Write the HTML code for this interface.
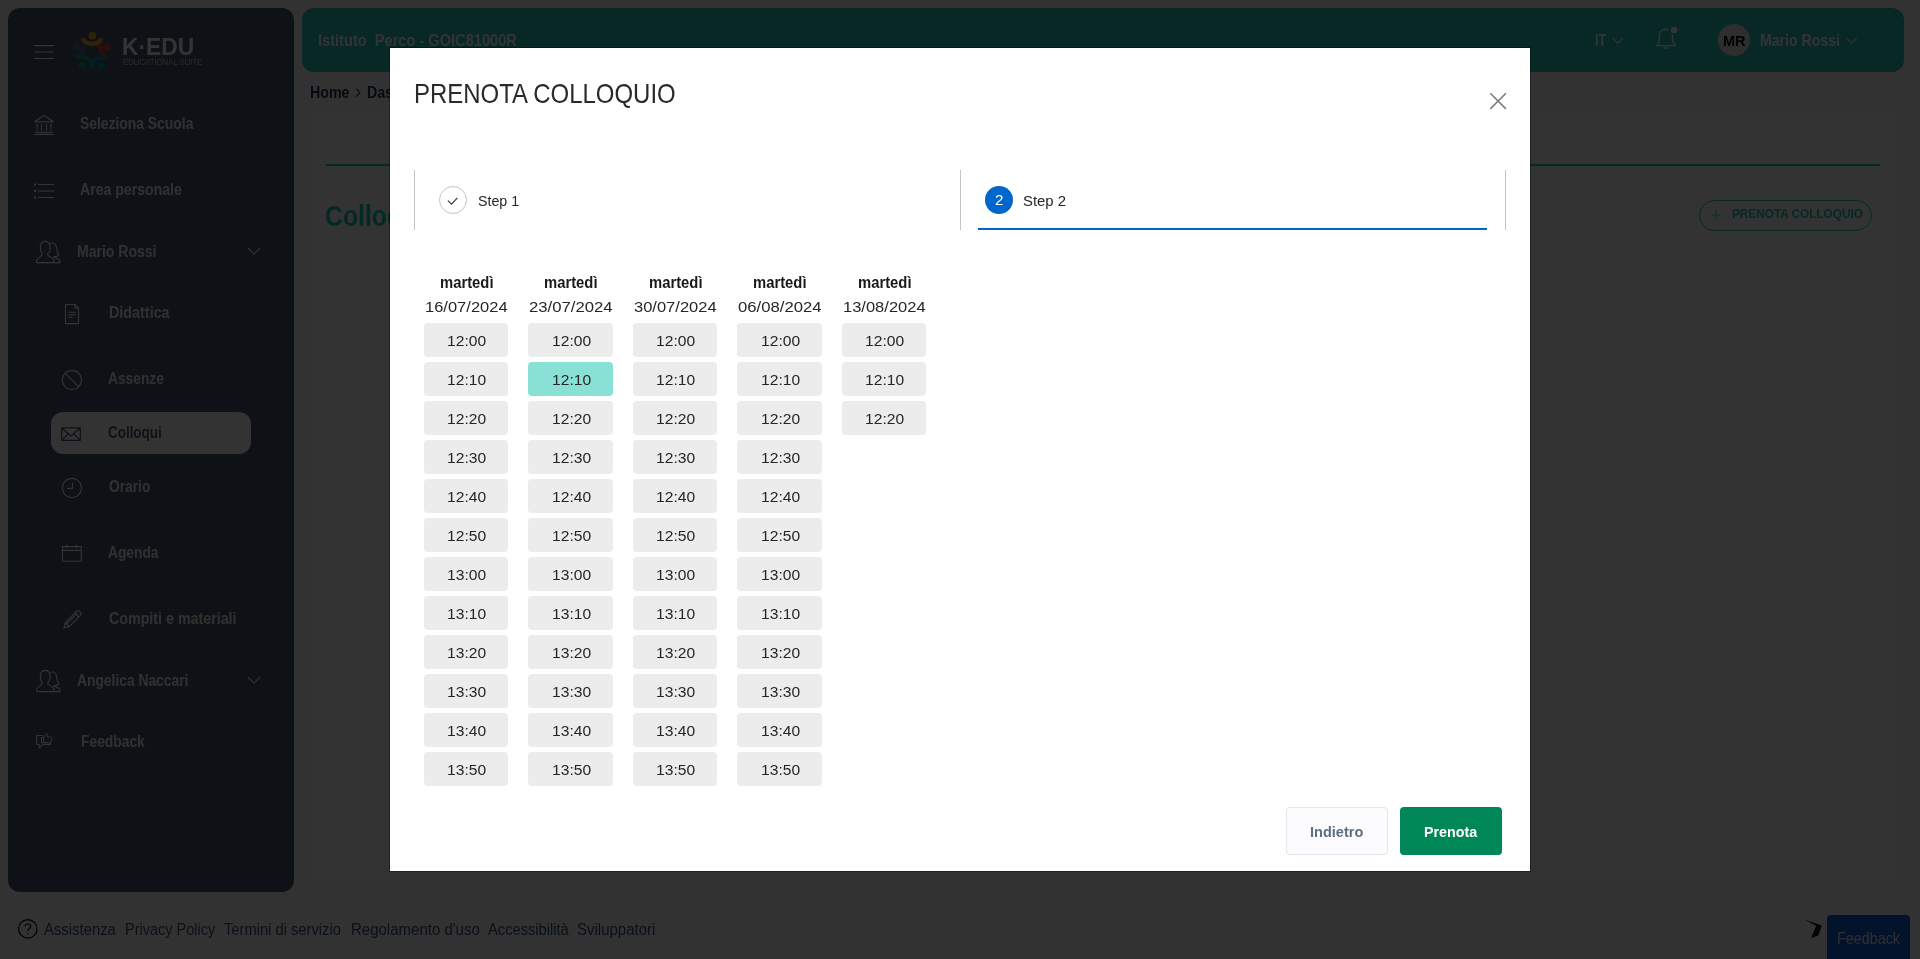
<!DOCTYPE html>
<html lang="it"><head><meta charset="utf-8"><title>K-EDU - Prenota colloquio</title>
<style>
html,body{margin:0;padding:0;overflow:hidden}
html{width:1920px;height:959px}
body{width:1920px;height:959px;overflow:hidden;position:relative;background:#fbfbfb;font-family:"Liberation Sans",sans-serif}
.t{position:absolute;line-height:1;white-space:pre;transform-origin:0 0;display:block}
.abs{position:absolute}
#page{position:absolute;left:0;top:0;width:1920px;height:959px}
#dim{position:absolute;left:0;top:0;width:1920px;height:959px;background:rgba(0,0,0,.8)}
#sidebar{position:absolute;left:8px;top:8px;width:286px;height:884px;border-radius:12px;background:#455b71}
#topbar{position:absolute;left:302px;top:8px;width:1602px;height:64px;border-radius:12px;background:#28c8b9}
#card{position:absolute;left:310px;top:112px;width:1586px;height:770px;border-radius:12px;background:#fff}
#pill{position:absolute;left:51px;top:412px;width:200px;height:42px;border-radius:12px;background:#fff}
#modal{position:absolute;left:390px;top:48px;width:1140px;height:823px;background:#fff;box-shadow:0 0 0 1px rgba(0,0,0,.35)}
.slot{position:absolute;height:34px;border-radius:4px;background:#ececec}
.slot.sel{background:#89e0d4}
svg{position:absolute;overflow:visible}
#all{position:absolute;left:0;top:0;width:1920px;height:959px;overflow:hidden;will-change:transform}
</style></head><body>
<div id="all">
<div id="page">
<div id="card"></div>
<div id="sidebar"></div>
<div id="topbar"></div>
<svg style="left:34px;top:40px" width="20" height="24"><g stroke="#fff" stroke-width="1.2"><path d="M0 5.6H20M0 12H20M0 18.5H20"/></g></svg>
<span class="t" style="left:122.30px;top:35px;font-size:24.5px;color:#ffffff;font-weight:700;transform:scaleX(0.9306);">K·EDU</span>
<span class="t" style="left:122.60px;top:58px;font-size:8.7px;color:rgba(255,255,255,.7);transform:scaleX(0.8949);">EDUCATIONAL SUITE</span>
<span class="t" style="left:80.40px;top:116px;font-size:16px;color:rgba(255,255,255,.9);font-weight:700;transform:scaleX(0.8672);">Seleziona Scuola</span>
<span class="t" style="left:80.40px;top:182px;font-size:16px;color:rgba(255,255,255,.9);font-weight:700;transform:scaleX(0.8810);">Area personale</span>
<span class="t" style="left:76.70px;top:244px;font-size:16px;color:rgba(255,255,255,.9);font-weight:700;transform:scaleX(0.8766);">Mario Rossi</span>
<span class="t" style="left:108.50px;top:305px;font-size:16px;color:rgba(255,255,255,.9);font-weight:700;transform:scaleX(0.8968);">Didattica</span>
<span class="t" style="left:108.30px;top:371px;font-size:16px;color:rgba(255,255,255,.9);font-weight:700;transform:scaleX(0.8610);">Assenze</span>
<span class="t" style="left:108.70px;top:479px;font-size:16px;color:rgba(255,255,255,.9);font-weight:700;transform:scaleX(0.8601);">Orario</span>
<span class="t" style="left:108.30px;top:545px;font-size:16px;color:rgba(255,255,255,.9);font-weight:700;transform:scaleX(0.8607);">Agenda</span>
<span class="t" style="left:108.70px;top:611px;font-size:16px;color:rgba(255,255,255,.9);font-weight:700;transform:scaleX(0.8907);">Compiti e materiali</span>
<span class="t" style="left:76.70px;top:673px;font-size:16px;color:rgba(255,255,255,.9);font-weight:700;transform:scaleX(0.8639);">Angelica Naccari</span>
<span class="t" style="left:80.60px;top:734px;font-size:16px;color:rgba(255,255,255,.9);font-weight:700;transform:scaleX(0.8643);">Feedback</span>
<div id="pill"></div>
<span class="t" style="left:107.50px;top:425px;font-size:16px;color:#455b71;font-weight:700;transform:scaleX(0.8393);">Colloqui</span>
<span class="t" style="left:318.40px;top:33px;font-size:16px;color:#ffffff;font-weight:700;transform:scaleX(0.9126);">Istituto  Perco - GOIC81000R</span>
<span class="t" style="left:1594.70px;top:33px;font-size:16px;color:#ffffff;font-weight:700;transform:scaleX(0.7807);">IT</span>
<div class="abs" style="left:1718px;top:24px;width:32px;height:32px;border-radius:50%;background:#e6e6e6"></div>
<span class="t" style="left:1723.30px;top:33px;font-size:15px;color:#000;font-weight:700;transform:scaleX(0.9645);">MR</span>
<span class="t" style="left:1759.50px;top:33px;font-size:16px;color:#ffffff;font-weight:700;transform:scaleX(0.8821);">Mario Rossi</span>
<span class="t" style="left:310.20px;top:85px;font-size:16px;color:#17324d;font-weight:700;transform:scaleX(0.8886);">Home</span>
<span class="t" style="left:366.90px;top:85px;font-size:16px;color:#17324d;font-weight:700;transform:scaleX(0.8867);">Dashboard</span>
<div class="abs" style="left:326px;top:164px;width:1554px;height:2px;background:#14cdb9"></div>
<span class="t" style="left:325.40px;top:201px;font-size:29.5px;color:#14cdb9;font-weight:700;transform:scaleX(0.8395);">Colloqui</span>
<div class="abs" style="left:1699px;top:200px;width:171px;height:29px;border:1px solid #14cdb9;border-radius:16px"></div>
<span class="t" style="left:1731.90px;top:207px;font-size:13.2px;color:#14cdb9;font-weight:700;transform:scaleX(0.8932);">PRENOTA COLLOQUIO</span>
<div class="abs" style="left:0;top:900px;width:1920px;height:1px;background:#fff"></div>
<span class="t" style="left:44.40px;top:922px;font-size:16px;color:#35527d;transform:scaleX(0.9287);">Assistenza</span>
<span class="t" style="left:125.00px;top:922px;font-size:16px;color:#35527d;transform:scaleX(0.9063);">Privacy Policy</span>
<span class="t" style="left:224.40px;top:922px;font-size:16px;color:#35527d;transform:scaleX(0.9190);">Termini di servizio</span>
<span class="t" style="left:350.60px;top:922px;font-size:16px;color:#35527d;transform:scaleX(0.9376);">Regolamento d'uso</span>
<span class="t" style="left:487.75px;top:922px;font-size:16px;color:#35527d;transform:scaleX(0.9173);">Accessibilità</span>
<span class="t" style="left:576.90px;top:922px;font-size:16px;color:#35527d;transform:scaleX(0.9371);">Sviluppatori</span>
<div class="abs" style="left:1827px;top:915px;width:83px;height:44px;border-radius:4px 4px 0 0;background:#0a5fd6"></div>
<span class="t" style="left:1837.00px;top:930px;font-size:17px;color:rgba(255,255,255,.85);transform:scaleX(0.8438);">Feedback</span>
<svg style="left:0;top:0" width="1920" height="959" fill="none" stroke="#fff" stroke-width="1.1" stroke-linejoin="round"><path d="M34.6 121.8L44 115.4L53.4 121.8ZM37.1 123.4V130.6M41.5 123.4V130.6M46.5 123.4V130.6M50.9 123.4V130.6M35 132.3H53M34.6 134.4H53.4"/><path d="M38 184.5H54M38 191H54M38 197.5H54"/><path d="M34 184.5H36M34 191H36M34 197.5H36" stroke-width="1.8"/><g transform="translate(36 241)"><path d="M0.5 21.6V19.3C0.7 17.3 5.9 15.8 6.3 13.1C4.9 11.6 4.3 9.3 4.3 6.3C4.3 2.5 6.2 0.4 9.2 0.4C11.6 0.4 13 1.7 13.5 3.5M13.5 3.5C14.2 5.6 14.4 8.4 13.6 10.4C13.2 11.5 12.3 12.4 11.6 13.1C11.5 14.6 13.6 15.6 17 17.5C17.9 18.1 18 19.4 18 21.6M13.5 3.5C14.3 2.5 15.3 2 16.6 2C19.3 2 20.3 4.4 20.7 7.6C21 10.6 22.5 12.6 22.8 13.9C22.2 15.2 19.8 15.7 17.6 15.6C18 17.2 23.3 17.2 23.9 19.4V21.6H0.5"/></g><g transform="translate(36 670)"><path d="M0.5 21.6V19.3C0.7 17.3 5.9 15.8 6.3 13.1C4.9 11.6 4.3 9.3 4.3 6.3C4.3 2.5 6.2 0.4 9.2 0.4C11.6 0.4 13 1.7 13.5 3.5M13.5 3.5C14.2 5.6 14.4 8.4 13.6 10.4C13.2 11.5 12.3 12.4 11.6 13.1C11.5 14.6 13.6 15.6 17 17.5C17.9 18.1 18 19.4 18 21.6M13.5 3.5C14.3 2.5 15.3 2 16.6 2C19.3 2 20.3 4.4 20.7 7.6C21 10.6 22.5 12.6 22.8 13.9C22.2 15.2 19.8 15.7 17.6 15.6C18 17.2 23.3 17.2 23.9 19.4V21.6H0.5"/></g><path d="M247.7 247.9L253.95 254.20000000000002L260.2 247.9"/><path d="M247.7 676.9L253.95 683.1999999999999L260.2 676.9"/><path d="M65.5 304.5H75L78.6 308.3V323.6H65.5ZM75 304.5V308.3H78.6M68.3 312.2H76M68.3 314.7H76M68.3 317.2H72.4"/><circle cx="71.9" cy="380" r="9.6"/><path d="M65.1 373.2L78.7 386.8"/><circle cx="71.9" cy="488" r="9.6"/><path d="M72.5 482.4V488.4H67"/><path d="M62.5 546.6H81.3V561.3H62.5ZM62.5 550.4H81.3M67 544.8V548M76.4 544.8V548"/><path d="M63.8 627.9L65.2 622.6L76.6 611.2Q78 610 79.4 611.2L80.6 612.4Q81.8 613.8 80.6 615.2L69.2 626.6ZM65.2 622.6L69.2 626.6M75 612.9L78.9 616.8M66.4 624L77.4 613"/><path d="M43 735.5H36.6V744.4H39.2V748L43 744.4H50.6V742.6"/><path d="M41.5 737.8H43.6V742.7H41.5ZM43.6 738L46.3 733.2C47.6 733.2 48 734.2 47.6 735.4L47.2 737H50.6C51.8 737 52 738 51.8 738.8L50.8 741.8C50.6 742.5 50 742.7 49.4 742.7H43.6" stroke-width="1"/><path d="M1612.6 37.8L1617.8 43.199999999999996L1623.0 37.8"/><path d="M1846.4 37.8L1851.6000000000001 43.199999999999996L1856.8000000000002 37.8"/><path d="M1656.4 45.7H1675.7M1656.9 45.4C1658.6 43.6 1659.3 42.4 1659.3 39.8V35.8C1659.3 31.8 1662 29.3 1665.7 29.3C1666.8 29.3 1667.8 29.6 1668.6 30.1M1665.7 29.3V27.6M1672.5 34.6V39.8C1672.5 42.4 1673.4 43.6 1675.2 45.4M1663.9 46.6C1664.2 49 1667.4 49 1667.8 46.6" stroke-width="1.3"/><circle cx="1674.1" cy="30" r="3.2" fill="#fff" stroke="none"/></svg>
<svg style="left:0;top:0" width="1920" height="959" fill="none" stroke-linejoin="round"><path d="M61.7 427.8H80.3V440.3H61.7ZM61.9 428L71 436L80.1 428M61.9 440.1L68.4 433.8M80.1 440.1L73.6 433.8" stroke="#455b71" stroke-width="1.2"/><path d="M356.2 88.6L360 92.6L356.2 96.6" stroke="#17324d" stroke-width="1.1"/><path d="M1711 215H1721.2M1716.1 209.9V220.1" stroke="#14cdb9" stroke-width="1" opacity=".75"/><circle cx="27.8" cy="928.9" r="9.2" stroke="#000" stroke-width="1.2"/><path d="M25 926.3C25 923.2 30.8 923.2 30.8 926.3C30.8 928.6 27.8 928.6 27.8 931.2" stroke="#000" stroke-width="1.2"/><circle cx="27.8" cy="933.7" r="0.8" fill="#000"/><path d="M1804.6 919.6L1821.8 925.5L1818.4 935.4L1811 938L1816.2 926Z" fill="#0c1a2a" stroke="none"/><g stroke-width="4.3" stroke-linecap="round"><path d="M83.9 42C84.8 45 84.4 51.5 79 54.9" stroke="#5a63a6"/><path d="M100.7 42C99 46 99.8 52.5 106.4 57" stroke="#d9433a"/><path d="M104 57.9C97.5 56 92.5 60 91.7 66.8" stroke="#0d8ea6"/><path d="M76.8 57C82 56.4 90.5 56.5 91.5 66.8" stroke="#149a78"/><path d="M83.3 40C86.5 45 97.5 45 100.7 40" stroke="#ecaf22"/></g><circle cx="92.3" cy="35.8" r="3.8" fill="#ecaf22"/><circle cx="107" cy="47" r="3.8" fill="#d9433a"/><circle cx="101.7" cy="65.5" r="3.8" fill="#0d8ea6"/><circle cx="82" cy="65.5" r="3.8" fill="#149a78"/><circle cx="77.1" cy="46.8" r="3.8" fill="#5a63a6"/></svg>
</div>
<div id="dim"></div>
<div id="modal"></div>
<span class="t" style="left:414.00px;top:80px;font-size:28px;color:#2a2a2a;transform:scaleX(0.8552);">PRENOTA COLLOQUIO</span>
<div class="abs" style="left:414px;top:170px;width:1px;height:60px;background:#c4c4c4"></div>
<div class="abs" style="left:960px;top:170px;width:1px;height:60px;background:#c4c4c4"></div>
<div class="abs" style="left:1505px;top:170px;width:1px;height:60px;background:#c4c4c4"></div>
<div class="abs" style="left:439px;top:186px;width:26px;height:26px;border:1px solid #c2c5c8;border-radius:50%"></div>
<svg style="left:439px;top:186px" width="28" height="28"><path d="M8.9 14.6L12.6 18.1L18.3 11.9" fill="none" stroke="#333" stroke-width="1.1"/></svg>
<span class="t" style="left:478.10px;top:193px;font-size:15.5px;color:#262626;transform:scaleX(0.9171);">Step 1</span>
<div class="abs" style="left:985px;top:186px;width:28px;height:28px;border-radius:50%;background:#0066cc"></div>
<span class="t" style="left:994.50px;top:192px;font-size:15.5px;color:#fff;transform:scaleX(0.9744);">2</span>
<span class="t" style="left:1023.05px;top:193px;font-size:15.5px;color:#262626;transform:scaleX(0.9607);">Step 2</span>
<div class="abs" style="left:978px;top:228px;width:509px;height:2px;background:#0066cc"></div>
<svg style="left:1490px;top:93px" width="16" height="16"><path d="M0.3 0.3L15.9 15.9M15.9 0.3L0.3 15.9" stroke="#7a7a7a" stroke-width="1.5" fill="none"/></svg>
<span class="t" style="left:439.50px;top:275px;font-size:16px;color:#1a1a1a;font-weight:700;transform:scaleX(0.9256);">martedì</span>
<span class="t" style="left:424.80px;top:299px;font-size:15.5px;color:#262626;transform:scaleX(1.0647);">16/07/2024</span>
<div class="slot" style="left:424px;top:323px;width:84px"></div>
<span class="t" style="left:447.00px;top:333px;font-size:15.5px;color:#262626;transform:scaleX(1.0080);">12:00</span>
<div class="slot" style="left:424px;top:362px;width:84px"></div>
<span class="t" style="left:447.00px;top:372px;font-size:15.5px;color:#262626;transform:scaleX(1.0080);">12:10</span>
<div class="slot" style="left:424px;top:401px;width:84px"></div>
<span class="t" style="left:447.00px;top:411px;font-size:15.5px;color:#262626;transform:scaleX(1.0080);">12:20</span>
<div class="slot" style="left:424px;top:440px;width:84px"></div>
<span class="t" style="left:447.00px;top:450px;font-size:15.5px;color:#262626;transform:scaleX(1.0080);">12:30</span>
<div class="slot" style="left:424px;top:479px;width:84px"></div>
<span class="t" style="left:447.00px;top:489px;font-size:15.5px;color:#262626;transform:scaleX(1.0080);">12:40</span>
<div class="slot" style="left:424px;top:518px;width:84px"></div>
<span class="t" style="left:447.00px;top:528px;font-size:15.5px;color:#262626;transform:scaleX(1.0080);">12:50</span>
<div class="slot" style="left:424px;top:557px;width:84px"></div>
<span class="t" style="left:447.00px;top:567px;font-size:15.5px;color:#262626;transform:scaleX(1.0080);">13:00</span>
<div class="slot" style="left:424px;top:596px;width:84px"></div>
<span class="t" style="left:447.00px;top:606px;font-size:15.5px;color:#262626;transform:scaleX(1.0080);">13:10</span>
<div class="slot" style="left:424px;top:635px;width:84px"></div>
<span class="t" style="left:447.00px;top:645px;font-size:15.5px;color:#262626;transform:scaleX(1.0080);">13:20</span>
<div class="slot" style="left:424px;top:674px;width:84px"></div>
<span class="t" style="left:447.00px;top:684px;font-size:15.5px;color:#262626;transform:scaleX(1.0080);">13:30</span>
<div class="slot" style="left:424px;top:713px;width:84px"></div>
<span class="t" style="left:447.00px;top:723px;font-size:15.5px;color:#262626;transform:scaleX(1.0080);">13:40</span>
<div class="slot" style="left:424px;top:752px;width:84px"></div>
<span class="t" style="left:447.00px;top:762px;font-size:15.5px;color:#262626;transform:scaleX(1.0080);">13:50</span>
<span class="t" style="left:544.00px;top:275px;font-size:16px;color:#1a1a1a;font-weight:700;transform:scaleX(0.9256);">martedì</span>
<span class="t" style="left:528.80px;top:299px;font-size:15.5px;color:#262626;transform:scaleX(1.0776);">23/07/2024</span>
<div class="slot" style="left:528px;top:323px;width:85px"></div>
<span class="t" style="left:551.50px;top:333px;font-size:15.5px;color:#262626;transform:scaleX(1.0080);">12:00</span>
<div class="slot sel" style="left:528px;top:362px;width:85px"></div>
<span class="t" style="left:551.50px;top:372px;font-size:15.5px;color:#262626;transform:scaleX(1.0080);">12:10</span>
<div class="slot" style="left:528px;top:401px;width:85px"></div>
<span class="t" style="left:551.50px;top:411px;font-size:15.5px;color:#262626;transform:scaleX(1.0080);">12:20</span>
<div class="slot" style="left:528px;top:440px;width:85px"></div>
<span class="t" style="left:551.50px;top:450px;font-size:15.5px;color:#262626;transform:scaleX(1.0080);">12:30</span>
<div class="slot" style="left:528px;top:479px;width:85px"></div>
<span class="t" style="left:551.50px;top:489px;font-size:15.5px;color:#262626;transform:scaleX(1.0080);">12:40</span>
<div class="slot" style="left:528px;top:518px;width:85px"></div>
<span class="t" style="left:551.50px;top:528px;font-size:15.5px;color:#262626;transform:scaleX(1.0080);">12:50</span>
<div class="slot" style="left:528px;top:557px;width:85px"></div>
<span class="t" style="left:551.50px;top:567px;font-size:15.5px;color:#262626;transform:scaleX(1.0080);">13:00</span>
<div class="slot" style="left:528px;top:596px;width:85px"></div>
<span class="t" style="left:551.50px;top:606px;font-size:15.5px;color:#262626;transform:scaleX(1.0080);">13:10</span>
<div class="slot" style="left:528px;top:635px;width:85px"></div>
<span class="t" style="left:551.50px;top:645px;font-size:15.5px;color:#262626;transform:scaleX(1.0080);">13:20</span>
<div class="slot" style="left:528px;top:674px;width:85px"></div>
<span class="t" style="left:551.50px;top:684px;font-size:15.5px;color:#262626;transform:scaleX(1.0080);">13:30</span>
<div class="slot" style="left:528px;top:713px;width:85px"></div>
<span class="t" style="left:551.50px;top:723px;font-size:15.5px;color:#262626;transform:scaleX(1.0080);">13:40</span>
<div class="slot" style="left:528px;top:752px;width:85px"></div>
<span class="t" style="left:551.50px;top:762px;font-size:15.5px;color:#262626;transform:scaleX(1.0080);">13:50</span>
<span class="t" style="left:648.50px;top:275px;font-size:16px;color:#1a1a1a;font-weight:700;transform:scaleX(0.9256);">martedì</span>
<span class="t" style="left:633.80px;top:299px;font-size:15.5px;color:#262626;transform:scaleX(1.0647);">30/07/2024</span>
<div class="slot" style="left:633px;top:323px;width:84px"></div>
<span class="t" style="left:656.00px;top:333px;font-size:15.5px;color:#262626;transform:scaleX(1.0080);">12:00</span>
<div class="slot" style="left:633px;top:362px;width:84px"></div>
<span class="t" style="left:656.00px;top:372px;font-size:15.5px;color:#262626;transform:scaleX(1.0080);">12:10</span>
<div class="slot" style="left:633px;top:401px;width:84px"></div>
<span class="t" style="left:656.00px;top:411px;font-size:15.5px;color:#262626;transform:scaleX(1.0080);">12:20</span>
<div class="slot" style="left:633px;top:440px;width:84px"></div>
<span class="t" style="left:656.00px;top:450px;font-size:15.5px;color:#262626;transform:scaleX(1.0080);">12:30</span>
<div class="slot" style="left:633px;top:479px;width:84px"></div>
<span class="t" style="left:656.00px;top:489px;font-size:15.5px;color:#262626;transform:scaleX(1.0080);">12:40</span>
<div class="slot" style="left:633px;top:518px;width:84px"></div>
<span class="t" style="left:656.00px;top:528px;font-size:15.5px;color:#262626;transform:scaleX(1.0080);">12:50</span>
<div class="slot" style="left:633px;top:557px;width:84px"></div>
<span class="t" style="left:656.00px;top:567px;font-size:15.5px;color:#262626;transform:scaleX(1.0080);">13:00</span>
<div class="slot" style="left:633px;top:596px;width:84px"></div>
<span class="t" style="left:656.00px;top:606px;font-size:15.5px;color:#262626;transform:scaleX(1.0080);">13:10</span>
<div class="slot" style="left:633px;top:635px;width:84px"></div>
<span class="t" style="left:656.00px;top:645px;font-size:15.5px;color:#262626;transform:scaleX(1.0080);">13:20</span>
<div class="slot" style="left:633px;top:674px;width:84px"></div>
<span class="t" style="left:656.00px;top:684px;font-size:15.5px;color:#262626;transform:scaleX(1.0080);">13:30</span>
<div class="slot" style="left:633px;top:713px;width:84px"></div>
<span class="t" style="left:656.00px;top:723px;font-size:15.5px;color:#262626;transform:scaleX(1.0080);">13:40</span>
<div class="slot" style="left:633px;top:752px;width:84px"></div>
<span class="t" style="left:656.00px;top:762px;font-size:15.5px;color:#262626;transform:scaleX(1.0080);">13:50</span>
<span class="t" style="left:753.00px;top:275px;font-size:16px;color:#1a1a1a;font-weight:700;transform:scaleX(0.9256);">martedì</span>
<span class="t" style="left:737.80px;top:299px;font-size:15.5px;color:#262626;transform:scaleX(1.0776);">06/08/2024</span>
<div class="slot" style="left:737px;top:323px;width:85px"></div>
<span class="t" style="left:760.50px;top:333px;font-size:15.5px;color:#262626;transform:scaleX(1.0080);">12:00</span>
<div class="slot" style="left:737px;top:362px;width:85px"></div>
<span class="t" style="left:760.50px;top:372px;font-size:15.5px;color:#262626;transform:scaleX(1.0080);">12:10</span>
<div class="slot" style="left:737px;top:401px;width:85px"></div>
<span class="t" style="left:760.50px;top:411px;font-size:15.5px;color:#262626;transform:scaleX(1.0080);">12:20</span>
<div class="slot" style="left:737px;top:440px;width:85px"></div>
<span class="t" style="left:760.50px;top:450px;font-size:15.5px;color:#262626;transform:scaleX(1.0080);">12:30</span>
<div class="slot" style="left:737px;top:479px;width:85px"></div>
<span class="t" style="left:760.50px;top:489px;font-size:15.5px;color:#262626;transform:scaleX(1.0080);">12:40</span>
<div class="slot" style="left:737px;top:518px;width:85px"></div>
<span class="t" style="left:760.50px;top:528px;font-size:15.5px;color:#262626;transform:scaleX(1.0080);">12:50</span>
<div class="slot" style="left:737px;top:557px;width:85px"></div>
<span class="t" style="left:760.50px;top:567px;font-size:15.5px;color:#262626;transform:scaleX(1.0080);">13:00</span>
<div class="slot" style="left:737px;top:596px;width:85px"></div>
<span class="t" style="left:760.50px;top:606px;font-size:15.5px;color:#262626;transform:scaleX(1.0080);">13:10</span>
<div class="slot" style="left:737px;top:635px;width:85px"></div>
<span class="t" style="left:760.50px;top:645px;font-size:15.5px;color:#262626;transform:scaleX(1.0080);">13:20</span>
<div class="slot" style="left:737px;top:674px;width:85px"></div>
<span class="t" style="left:760.50px;top:684px;font-size:15.5px;color:#262626;transform:scaleX(1.0080);">13:30</span>
<div class="slot" style="left:737px;top:713px;width:85px"></div>
<span class="t" style="left:760.50px;top:723px;font-size:15.5px;color:#262626;transform:scaleX(1.0080);">13:40</span>
<div class="slot" style="left:737px;top:752px;width:85px"></div>
<span class="t" style="left:760.50px;top:762px;font-size:15.5px;color:#262626;transform:scaleX(1.0080);">13:50</span>
<span class="t" style="left:857.50px;top:275px;font-size:16px;color:#1a1a1a;font-weight:700;transform:scaleX(0.9256);">martedì</span>
<span class="t" style="left:842.80px;top:299px;font-size:15.5px;color:#262626;transform:scaleX(1.0647);">13/08/2024</span>
<div class="slot" style="left:842px;top:323px;width:84px"></div>
<span class="t" style="left:865.00px;top:333px;font-size:15.5px;color:#262626;transform:scaleX(1.0080);">12:00</span>
<div class="slot" style="left:842px;top:362px;width:84px"></div>
<span class="t" style="left:865.00px;top:372px;font-size:15.5px;color:#262626;transform:scaleX(1.0080);">12:10</span>
<div class="slot" style="left:842px;top:401px;width:84px"></div>
<span class="t" style="left:865.00px;top:411px;font-size:15.5px;color:#262626;transform:scaleX(1.0080);">12:20</span>
<div class="abs" style="left:1286px;top:807px;width:100px;height:46px;border:1px solid #e3e6ee;border-radius:4px;background:#fcfcff"></div>
<span class="t" style="left:1310.25px;top:824px;font-size:15.5px;color:#5c6f82;font-weight:700;transform:scaleX(0.9370);">Indietro</span>
<div class="abs" style="left:1400px;top:807px;width:102px;height:48px;border-radius:4px;background:#008758"></div>
<span class="t" style="left:1424.40px;top:824px;font-size:15.5px;color:#fff;font-weight:700;transform:scaleX(0.9201);">Prenota</span>
</div>
</body></html>
